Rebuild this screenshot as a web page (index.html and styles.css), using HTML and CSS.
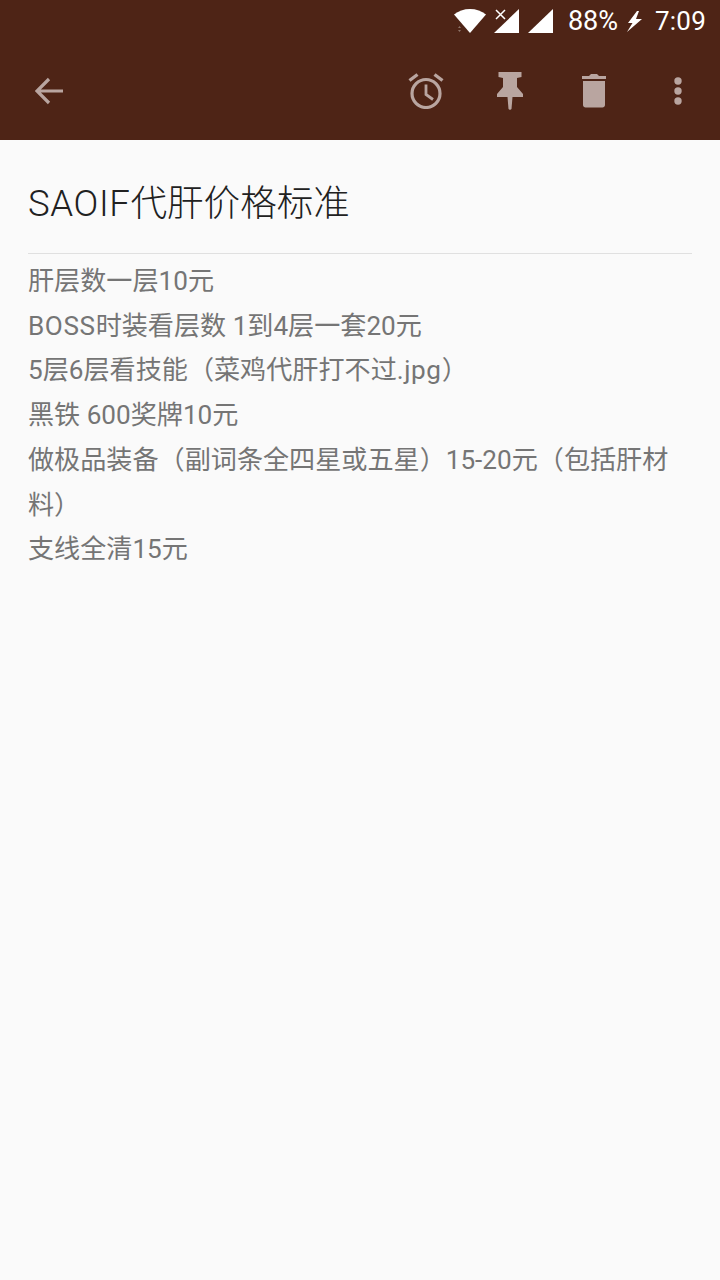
FILE: index.html
```html
<!DOCTYPE html>
<html lang="zh-CN">
<head>
    <meta charset="UTF-8">
    <meta name="viewport" content="width=device-width, initial-scale=1.0">
    <title>SAOIF代肝价格标准</title>
    <link rel="stylesheet" href="styles.css">
</head>
<body>
<div class="statusbar">
  <!-- wifi -->
  <svg class="st-wifi" width="32" height="24" viewBox="0 0 32 24"><path d="M0 5.500C4.200 2 10 0 16 0s11.800 2 16 5.500L16 24z" fill="#fff"/><path d="M4 19l1.500-2 1.500 2zM4 21l1.500 2 1.500-2z" fill="#8d7468"/></svg>
  <!-- signal, no service -->
  <svg class="st-sig1" width="26" height="24" viewBox="0 0 26 24"><path d="M25 0v24H0z" fill="#fff"/><path d="M2 1l9 9M11 1l-9 9" stroke="#4e2416" stroke-width="4" fill="none"/><path d="M2 1l9 9M11 1l-9 9" stroke="#fff" stroke-width="1.500" fill="none"/></svg>
  <svg class="st-sig2" width="25" height="24" viewBox="0 0 25 24"><path d="M25 0v24H0z" fill="#fff"/></svg>
  <span class="st-batt">88%</span>
  <svg class="st-bolt" width="15" height="21" viewBox="0 0 15 21"><path d="M10 0L1 12h4.500L0 21l15-13H9l3-8z" fill="#fff"/></svg>
  <span class="st-time">7:09</span>
</div>
<div class="toolbar">
  <svg class="tb-back" width="28" height="28" viewBox="0 0 28 28"><path d="M28 14H3M14 2L2 14l12 12" stroke="#b9a5a0" stroke-width="3.200" fill="none"/></svg>
  <div class="tb-actions">
    <div class="tb-cell">
      <svg width="36" height="36" viewBox="0 0 36 36">
        <circle cx="18" cy="20.500" r="14" stroke="#b9a5a0" stroke-width="3.200" fill="none"/>
        <path d="M18 11.500v10l7 5" stroke="#b9a5a0" stroke-width="2.800" fill="none"/>
        <path d="M1.500 7.500l8-6M34.500 7.500l-8-6" stroke="#b9a5a0" stroke-width="3.400" fill="none"/>
      </svg>
    </div>
    <div class="tb-cell">
      <svg width="26" height="38" viewBox="0 0 26 38"><path d="M1.500 0h23v5l-4.500 1v9l6 7v3H15.500l-1 12-1.500 1-1.500-1-1-12H0v-3l6-7V6L1.500 5z" fill="#b9a5a0"/></svg>
    </div>
    <div class="tb-cell">
      <svg width="24" height="34" viewBox="0 0 24 34"><path d="M0 2h7l2-2h6l2 2h7v3H0zM1 7h22v24c0 1.500-1.200 2.500-2.500 2.500h-17C2.200 33.500 1 32.500 1 31z" fill="#b9a5a0"/></svg>
    </div>
    <div class="tb-cell">
      <svg width="8" height="28" viewBox="0 0 8 28"><circle cx="4" cy="4" r="3.700" fill="#b9a5a0"/><circle cx="4" cy="14" r="3.700" fill="#b9a5a0"/><circle cx="4" cy="24" r="3.700" fill="#b9a5a0"/></svg>
    </div>
  </div>
</div>
<div class="note">
  <h1 class="note-title"><span class="lat">SAOIF</span>代肝价格标准</h1>
  <div class="note-body">
    <p>肝层数一层10元</p>
    <p><span class="lat">BOSS</span>时装看层数 1到4层一套20元</p>
    <p>5层6层看技能（菜鸡代肝打不过<span class="lat">.jpg</span>）</p>
    <p>黑铁 600奖牌10元</p>
    <p>做极品装备（副词条全四星或五星）15-20元（包括肝材料）</p>
    <p>支线全清15元</p>
  </div>
</div>
</body>
</html>
```

FILE: styles.css
```css
body{
  margin:0;
  height:1280px;
  overflow:hidden;
  background-color:#fafafa;
  font-family:Roboto,"Noto Sans CJK SC",sans-serif;
}

.statusbar{
  height:42px;
  background-color:#4e2416;
  color:#fff;
  display:flex;
  align-items:center;
  justify-content:flex-end;
  padding-right:14px;
  font-size:26px;
}
.st-wifi{margin-right:8px;}
.st-sig1{margin-right:8px;}
.st-sig2{margin-right:15px;}
.st-batt{font-size:27px;}
.st-bolt{margin:0 13px 0 9px;}
.st-time{letter-spacing:.2px;}

.toolbar{
  height:98px;
  box-sizing:border-box;
  padding:0 0 0 35px;
  background-color:#4e2416;
  display:flex;
  align-items:center;
  justify-content:space-between;
}
.tb-actions{
  display:flex;
  align-items:center;
}
.tb-cell{
  width:84px;
  display:flex;
  justify-content:center;
}

.note{
  padding:0 28px;
}
.note-title{
  margin:0;
  height:114px;
  box-sizing:border-box;
  padding-top:41px;
  border-bottom:1px solid #e0e0e0;
  font-size:36.600px;
  line-height:46px;
  font-weight:300;
  color:#212121;
}
.note-body{
  padding-top:5px;
  color:#757575;
  font-size:26.120px;
  line-height:44.700px;
}
.note-body p{
  margin:0;
}
.lat{
  letter-spacing:.6px;
}
```
